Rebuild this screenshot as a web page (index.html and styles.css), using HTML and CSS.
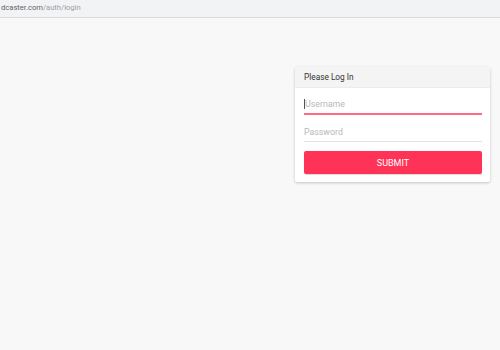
FILE: index.html
```html
<!DOCTYPE html>
<html>
<head>
<meta charset="utf-8">
<link rel="stylesheet" href="styles.css">
</head>
<body>
<div class="urlbar"><span class="host">dcaster.com</span><span class="path">/auth/login</span></div>
<main class="page">
  <div class="card">
    <div class="card-head">Please Log In</div>
    <form class="card-body">
      <div class="field active"><span class="caret"></span><span class="ph">Username</span></div>
      <div class="field"><span class="ph">Password</span></div>
      <button type="button" class="submit">SUBMIT</button>
    </form>
  </div>
</main>
</body>
</html>
```
FILE: styles.css
```css
* { box-sizing: border-box; }
html, body { margin: 0; padding: 0; }
body {
  width: 500px;
  height: 350px;
  background: #f8f8f8;
  font-family: Roboto, "Liberation Sans", sans-serif;
  overflow: hidden;
}
.urlbar {
  height: 18px;
  background: #f2f3f5;
  border-bottom: 1px solid #dadce0;
  font-size: 7.6px;
  line-height: 16px;
  padding-left: 1px;
}
.host { color: #5f6368; }
.path { color: #9aa0a6; }
.page {
  display: flex;
  justify-content: flex-end;
  padding: 49px 10px 0 0;
}
.card {
  width: 195px;
  background: #fff;
  box-shadow: 0 1px 3px rgba(0,0,0,0.22);
  border-radius: 2px;
}
.card-head {
  height: 21px;
  background: #f4f4f4;
  border-bottom: 1px solid #ececec;
  font-size: 8.3px;
  color: #333;
  padding-left: 9px;
  line-height: 20px;
}
.card-body {
  margin: 0;
  padding: 0 8px 8px 9px;
  display: flex;
  flex-direction: column;
}
.field {
  height: 26px;
  border-bottom: 1px solid #e3e3e3;
  display: flex;
  align-items: center;
  font-size: 8.8px;
  color: #b8b8b8;
  padding-top: 7px;
}
.field.active {
  border-bottom: 2px solid #ff6a86;
  height: 27px;
}
.field + .field { margin-top: 1px; }
.caret {
  width: 1px;
  height: 10px;
  background: #555;
}
.submit {
  margin-top: 9px;
  height: 23px;
  border: none;
  border-radius: 2px;
  background: #ff3358;
  color: #fff;
  font-family: Roboto, "Liberation Sans", sans-serif;
  font-size: 9px;
  padding: 0;
  box-shadow: 0 1px 1px rgba(0,0,0,0.15);
}
```
